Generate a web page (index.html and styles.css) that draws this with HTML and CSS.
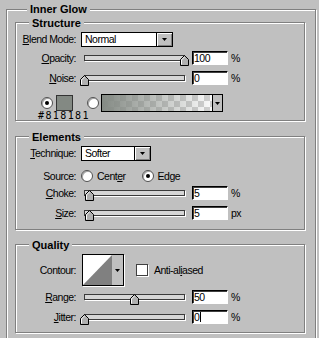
FILE: index.html
```html
<!DOCTYPE html>
<html>
<head>
<meta charset="utf-8">
<title>Inner Glow</title>
<link rel="stylesheet" href="styles.css">
</head>
<body>
<div class="outer">
  <div class="title outer-title">Inner Glow</div>

  <div class="group structure">
    <div class="title">Structure</div>
    <div class="row r-popup">
      <span class="label"><u>B</u>lend Mode:</span>
      <div class="popup popup-blend">
        <span class="popup-text">Normal</span>
        <span class="popup-btn"><svg width="5" height="3" viewBox="0 0 5 3"><polygon points="0,0 5,0 2.5,3" fill="#000"/></svg></span>
      </div>
    </div>
    <div class="row r-slider r-opacity">
      <span class="label"><u>O</u>pacity:</span>
      <div class="slider"><div class="track"></div><svg class="thumb" style="left:100px" width="9" height="11" viewBox="0 0 9 11"><polygon points="0.5,10.5 0.5,4.5 4.5,0.5 8.5,4.5 8.5,10.5" fill="#b0b0b0" stroke="#000"/><polyline points="1.5,9.5 1.5,4.9 4.5,1.9" fill="none" stroke="#fff"/></svg></div>
      <div class="field">100</div>
      <span class="unit">%</span>
    </div>
    <div class="row r-slider r-next">
      <span class="label"><u>N</u>oise:</span>
      <div class="slider"><div class="track"></div><svg class="thumb" style="left:0px" width="9" height="11" viewBox="0 0 9 11"><polygon points="0.5,10.5 0.5,4.5 4.5,0.5 8.5,4.5 8.5,10.5" fill="#b0b0b0" stroke="#000"/><polyline points="1.5,9.5 1.5,4.9 4.5,1.9" fill="none" stroke="#fff"/></svg></div>
      <div class="field">0</div>
      <span class="unit">%</span>
    </div>
    <div class="row r-color">
      <span class="radio on"></span>
      <span class="swatch"></span>
      <span class="radio radio-grad"></span>
      <div class="gradient">
        <span class="grad-fill"></span>
        <span class="grad-btn"><svg width="5" height="3" viewBox="0 0 5 3"><polygon points="0,0 5,0 2.5,3" fill="#000"/></svg></span>
      </div>
    </div>
    <div class="hex">#818181</div>
  </div>

  <div class="group elements">
    <div class="title">Elements</div>
    <div class="row r-popup r-technique">
      <span class="label"><u>T</u>echnique:</span>
      <div class="popup popup-tech">
        <span class="popup-text">Softer</span>
        <span class="popup-btn"><svg width="5" height="3" viewBox="0 0 5 3"><polygon points="0,0 5,0 2.5,3" fill="#000"/></svg></span>
      </div>
    </div>
    <div class="row r-source">
      <span class="label">Source:</span>
      <span class="radio radio-src"></span>
      <span class="opt">Cent<u>e</u>r</span>
      <span class="radio on radio-src2"></span>
      <span class="opt">Ed<u>g</u>e</span>
    </div>
    <div class="row r-slider r-choke">
      <span class="label"><u>C</u>hoke:</span>
      <div class="slider"><div class="track"></div><svg class="thumb" style="left:5px" width="9" height="11" viewBox="0 0 9 11"><polygon points="0.5,10.5 0.5,4.5 4.5,0.5 8.5,4.5 8.5,10.5" fill="#b0b0b0" stroke="#000"/><polyline points="1.5,9.5 1.5,4.9 4.5,1.9" fill="none" stroke="#fff"/></svg></div>
      <div class="field">5</div>
      <span class="unit">%</span>
    </div>
    <div class="row r-slider r-next">
      <span class="label"><u>S</u>ize:</span>
      <div class="slider"><div class="track"></div><svg class="thumb" style="left:5px" width="9" height="11" viewBox="0 0 9 11"><polygon points="0.5,10.5 0.5,4.5 4.5,0.5 8.5,4.5 8.5,10.5" fill="#b0b0b0" stroke="#000"/><polyline points="1.5,9.5 1.5,4.9 4.5,1.9" fill="none" stroke="#fff"/></svg></div>
      <div class="field">5</div>
      <span class="unit">px</span>
    </div>
  </div>

  <div class="group quality">
    <div class="title">Quality</div>
    <div class="row r-contour">
      <span class="label">Contour:</span>
      <div class="contour">
        <svg class="contour-preview" width="29" height="30" viewBox="0 0 29 30"><rect width="29" height="30" fill="#fff"/><polygon points="0,30 29,0 29,30" fill="#808080"/></svg>
        <span class="contour-btn"><svg width="5" height="3" viewBox="0 0 5 3"><polygon points="0,0 5,0 2.5,3" fill="#000"/></svg></span>
      </div>
      <span class="checkbox"></span>
      <span class="check-label">Anti-al<u>i</u>ased</span>
    </div>
    <div class="row r-slider r-range">
      <span class="label"><u>R</u>ange:</span>
      <div class="slider"><div class="track"></div><svg class="thumb" style="left:50px" width="9" height="11" viewBox="0 0 9 11"><polygon points="0.5,10.5 0.5,4.5 4.5,0.5 8.5,4.5 8.5,10.5" fill="#b0b0b0" stroke="#000"/><polyline points="1.5,9.5 1.5,4.9 4.5,1.9" fill="none" stroke="#fff"/></svg></div>
      <div class="field">50</div>
      <span class="unit">%</span>
    </div>
    <div class="row r-slider r-next">
      <span class="label"><u>J</u>itter:</span>
      <div class="slider"><div class="track"></div><svg class="thumb" style="left:0px" width="9" height="11" viewBox="0 0 9 11"><polygon points="0.5,10.5 0.5,4.5 4.5,0.5 8.5,4.5 8.5,10.5" fill="#b0b0b0" stroke="#000"/><polyline points="1.5,9.5 1.5,4.9 4.5,1.9" fill="none" stroke="#fff"/></svg></div>
      <div class="field">0<span class="caret"></span></div>
      <span class="unit">%</span>
    </div>
  </div>
</div>
</body>
</html>
```

FILE: styles.css
```css
html, body {
  margin: 0;
  padding: 0;
  overflow: hidden;
  background: #c0c0c0;
}
body {
  width: 319px;
  height: 338px;
  font-family: "Liberation Sans", Arial, sans-serif;
  font-size: 10.5px;
  letter-spacing: -0.5px;
  color: #000;
}
u {
  text-decoration: underline;
  text-underline-offset: 1px;
}

/* group boxes */
.outer {
  box-sizing: border-box;
  width: 310px;
  height: 345px;
  margin: 9px 0 0 6px;
  padding: 0 10px 0 8px;
  border: 1px solid #808080;
  box-shadow: 1px 1px 0 #fff, inset 1px 1px 0 #fff;
}
.group {
  border: 1px solid #808080;
  box-shadow: 1px 1px 0 #fff, inset 1px 1px 0 #fff;
}
.title {
  width: max-content;
  margin: -6px 0 0 13px;
  padding: 0 3px;
  background: #c0c0c0;
  font-weight: bold;
  font-size: 11px;
  line-height: 12px;
  letter-spacing: 0;
}
.outer-title {
  margin: -7px 0 0 12px;
}
.structure {
  margin-top: 7px;
}
.elements {
  margin-top: 15px;
  padding-bottom: 9px;
}
.quality {
  margin-top: 14px;
  padding-bottom: 8px;
}

/* rows */
.row {
  display: flex;
  align-items: center;
}
.label {
  flex: none;
  width: 60px;
  text-align: right;
  line-height: 13px;
  white-space: nowrap;
}
.r-popup {
  margin-top: 3px;
  height: 15px;
}
.r-slider {
  height: 14px;
}
.r-opacity {
  margin-top: 4px;
}
.r-next {
  margin-top: 6px;
}
.r-choke {
  margin-top: 4px;
}
.r-range {
  margin-top: 4px;
}
.r-source {
  margin-top: 9px;
  height: 12px;
}
.r-contour {
  margin-top: 3px;
  height: 32px;
}

/* popup menus */
.popup {
  box-sizing: border-box;
  display: flex;
  height: 15px;
  margin-left: 5px;
  border: 1px solid #000;
  background: #fff;
}
.popup-blend {
  width: 92px;
}
.popup-tech {
  width: 70px;
}
.popup-text {
  flex: 1;
  padding-left: 3px;
  line-height: 13px;
}
.popup-btn {
  display: flex;
  align-items: center;
  justify-content: center;
  width: 15px;
  border-left: 1px solid #000;
  background: #c0c0c0;
  box-shadow: inset 1px 1px 0 #fff, inset -1px -1px 0 #808080;
}

/* sliders */
.slider {
  position: relative;
  flex: none;
  width: 109px;
  height: 14px;
  margin-left: 4px;
}
.track {
  box-sizing: border-box;
  height: 6px;
  margin: 4px 4px 0 4px;
  border: 1px solid #3a3a3a;
  background: #d6d6d6;
  box-shadow: 1px 1px 0 #fff;
}
.thumb {
  position: absolute;
  top: 4px;
  display: block;
}
.field {
  box-sizing: border-box;
  flex: none;
  width: 36px;
  height: 14px;
  margin-left: 3px;
  padding-left: 1px;
  border: 1px solid;
  border-color: #000 #fff #fff #000;
  box-shadow: inset 1px 1px 0 #404040;
  background: #fff;
  line-height: 12px;
  display: flex;
  align-items: center;
}
.caret {
  display: inline-block;
  width: 1px;
  height: 10px;
  margin-left: 1px;
  background: #000;
}
.unit {
  margin-left: 3px;
  line-height: 13px;
}

/* radios */
.radio {
  box-sizing: border-box;
  flex: none;
  display: flex;
  align-items: center;
  justify-content: center;
  width: 12px;
  height: 12px;
  border-radius: 50%;
  border: 1px solid #505050;
  background: #fff;
  box-shadow: inset 1px 1px 0 #a8a8a8;
}
.radio.on::after {
  content: "";
  width: 4px;
  height: 4px;
  border-radius: 50%;
  background: #000;
}
.radio-src {
  margin-left: 5px;
}
.radio-src2 {
  margin-left: 16px;
}
.opt {
  margin-left: 4px;
  line-height: 13px;
}

/* color row */
.r-color {
  margin-top: 9px;
  height: 18px;
  padding-left: 25px;
}
.swatch {
  box-sizing: border-box;
  flex: none;
  width: 17px;
  height: 16px;
  margin-left: 3px;
  border: 1px solid #333;
  background: #838983;
}
.radio-grad {
  margin-left: 14px;
}
.gradient {
  box-sizing: border-box;
  display: flex;
  flex: none;
  width: 122px;
  height: 18px;
  margin-left: 2px;
  border: 1px solid #000;
}
.grad-fill {
  flex: 1;
  background:
    linear-gradient(to right, #848a84 0%, rgba(132, 138, 132, 0.6) 40%, rgba(132, 138, 132, 0) 100%),
    repeating-conic-gradient(#d0d0d0 0 25%, #fafafa 0 50%) 0 0 / 12px 12px;
}
.grad-btn {
  display: flex;
  align-items: center;
  justify-content: center;
  width: 9px;
  border-left: 1px solid #000;
  background: #c0c0c0;
}
.hex {
  margin-top: -1px;
  padding-left: 22px;
  font-family: "DejaVu Sans Mono", "Liberation Mono", monospace;
  font-size: 10px;
  letter-spacing: 1.4px;
  line-height: 9px;
}

/* contour */
.contour {
  box-sizing: border-box;
  display: flex;
  flex: none;
  width: 42px;
  height: 32px;
  margin-left: 6px;
  border: 1px solid #000;
  box-shadow: 1px 1px 0 #fff;
}
.contour-preview {
  display: block;
}
.contour-btn {
  flex: 1;
  display: flex;
  align-items: center;
  justify-content: center;
  background: #c0c0c0;
}
.checkbox {
  box-sizing: border-box;
  flex: none;
  width: 12px;
  height: 12px;
  margin-left: 12px;
  border: 1px solid #404040;
  background: #fff;
  box-shadow: 1px 1px 0 #fff;
}
.check-label {
  margin-left: 6px;
  line-height: 13px;
}
```
